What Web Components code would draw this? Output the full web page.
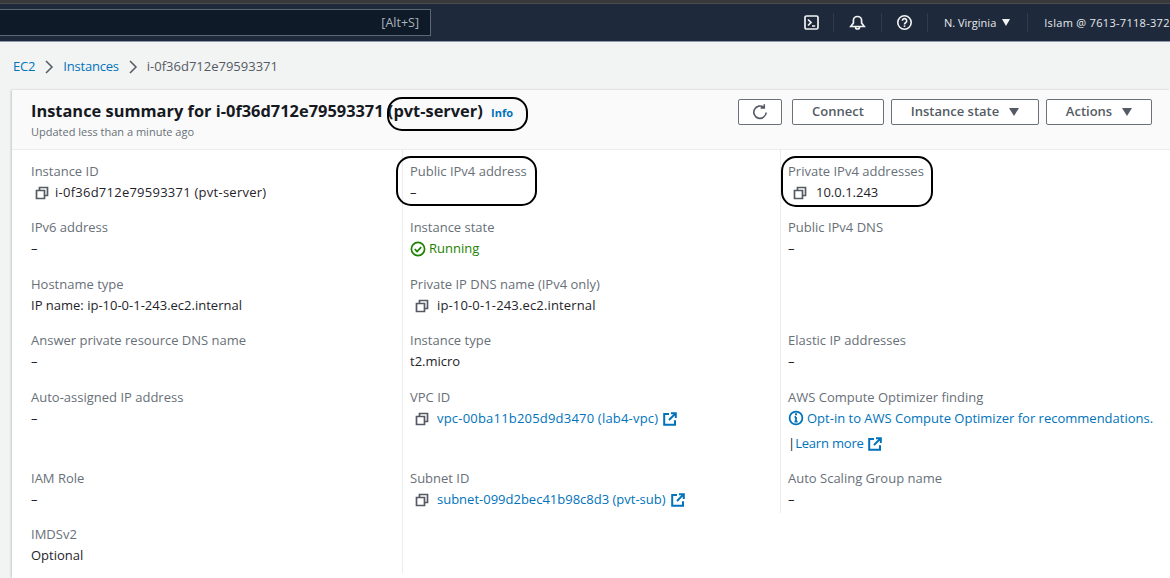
<!DOCTYPE html>
<html>
<head>
<meta charset="utf-8">
<title>Instance summary</title>
<style>
html,body {margin:0; height:578px; overflow:hidden; background:#f2f3f3;}
body {font:13px/19px "Open Sans","Noto Sans",sans-serif; color:#1f242b;}
</style>
</head>
<body>
<aws-topbar></aws-topbar>
<aws-crumbs></aws-crumbs>
<summary-card title-text="Instance summary for i-0f36d712e79593371 (pvt-server)" updated="Updated less than a minute ago">
  <aws-button slot="actions" wide="44" style="margin-right:3px"><svg width="18" height="18" viewBox="0 0 16 16" fill="none" stroke="#545b64" stroke-width="1.4"><path d="M13.5 8.5a5.5 5.5 0 1 1-2-4.6"/><path d="M11.8 1v3.3H8.6"/></svg></aws-button>
  <aws-button slot="actions" wide="92">Connect</aws-button>
  <aws-button slot="actions" wide="148" caret>Instance state</aws-button>
  <aws-button slot="actions" wide="106" caret>Actions</aws-button>

  <summary-field label="Instance ID"><copy-icon></copy-icon><span style="letter-spacing:.25px">i-0f36d712e79593371 (pvt-server)</span></summary-field>
  <summary-field label="Public IPv4 address">–</summary-field>
  <summary-field label="Private IPv4 addresses"><copy-icon style="margin:0 9px 0 5px"></copy-icon>10.0.1.243</summary-field>

  <summary-field label="IPv6 address">–</summary-field>
  <summary-field label="Instance state"><span style="color:#1d8102;display:inline-flex;align-items:center;gap:3px"><svg width="16" height="16" viewBox="0 0 16 16" fill="none" stroke="#1d8102" stroke-width="1.7"><circle cx="8" cy="8" r="6.6"/><path d="M4.8 8.2l2.3 2.3 4.1-4.4"/></svg>Running</span></summary-field>
  <summary-field label="Public IPv4 DNS">–</summary-field>

  <summary-field label="Hostname type">IP name: ip-10-0-1-243.ec2.internal</summary-field>
  <summary-field label="Private IP DNS name (IPv4 only)"><copy-icon style="margin:0 8px 0 5px"></copy-icon><span style="letter-spacing:.15px">ip-10-0-1-243.ec2.internal</span></summary-field>
  <summary-field></summary-field>

  <summary-field label="Answer private resource DNS name">–</summary-field>
  <summary-field label="Instance type">t2.micro</summary-field>
  <summary-field label="Elastic IP addresses">–</summary-field>

  <summary-field label="Auto-assigned IP address">–</summary-field>
  <summary-field label="VPC ID"><copy-icon style="margin:0 8px 0 5px"></copy-icon><span style="color:#0073bb;letter-spacing:.2px">vpc-00ba11b205d9d3470 (lab4-vpc)</span><ext-icon></ext-icon></summary-field>
  <summary-field label="AWS Compute Optimizer finding"><span style="color:#0073bb;display:inline-flex;align-items:center;gap:3px"><svg width="16" height="16" viewBox="0 0 16 16" fill="none" stroke="#0073bb" stroke-width="1.8"><circle cx="8" cy="8" r="6.4"/><path d="M8 7v4.6M6.4 11.6h3.2M6.6 7H8"/><path d="M7 4.2h2" stroke-width="2"/></svg>Opt-in to AWS Compute Optimizer for recommendations.</span><div style="margin-top:3px">|<span style="color:#0073bb;letter-spacing:-.2px">Learn more</span><ext-icon style="margin-left:4px"></ext-icon></div></summary-field>

  <summary-field label="IAM Role">–</summary-field>
  <summary-field label="Subnet ID"><copy-icon style="margin:0 8px 0 5px"></copy-icon><span style="color:#0073bb">subnet-099d2bec41b98c8d3 (pvt-sub)</span><ext-icon></ext-icon></summary-field>
  <summary-field label="Auto Scaling Group name">–</summary-field>

  <summary-field label="IMDSv2">Optional</summary-field>
  <summary-field></summary-field>
</summary-card>

<highlight-ring style="left:387px;top:97px;width:141px;height:34px"></highlight-ring>
<highlight-ring style="left:396px;top:156px;width:141px;height:50px"></highlight-ring>
<highlight-ring style="left:781px;top:156px;width:152px;height:51px"></highlight-ring>

<script>
customElements.define('aws-topbar', class extends HTMLElement {
    constructor() {
        super();
        this.attachShadow({ mode: 'open' }).innerHTML = `
        <style>
        :host {display:block; height:42px; background:#1e2a3b; border-top:3px solid #38393a; box-sizing:border-box; border-bottom:1px solid #8d99a8; box-shadow:inset 0 1px 0 #4a4c4e; color:#e6e9ec; font-size:11px; font-weight:500;}
        nav {display:flex; align-items:center; height:100%; white-space:nowrap; overflow:hidden;}
        .search {flex:none; width:431px; height:27px; box-sizing:border-box; margin-top:1px; background:#0f1a28; border:1px solid #5b6675; border-left:0; display:flex; align-items:center; justify-content:flex-end; padding-right:11px; color:#aab2bb; font-size:12.5px; font-weight:400;}
        .ico {flex:none; display:flex; justify-content:center; align-items:center; border-right:1px solid #2f3c4d; height:19px;}
        span {display:block;}
        </style>
        <nav>
            <div class="search">[Alt+S]</div>
            <div class="ico" style="margin-left:372px;width:30px;justify-content:flex-start"><svg width="17" height="17" viewBox="0 0 17 17" fill="none" stroke="#f2f3f3" stroke-width="1.7"><rect x="2" y="2" width="13" height="13" rx="1.5"/><path d="M5 5.5L8 8.5 5 11.5M9 12h3.2"/></svg></div>
            <div class="ico" style="width:47px"><svg width="17" height="17" viewBox="0 0 17 17" fill="none" stroke="#f2f3f3" stroke-width="1.7"><path d="M1.8 12.5h13.4L12.6 9V6.6a4.1 4.1 0 0 0-8.2 0V9z"/><path d="M6.5 13a2 2 0 0 0 4 0"/></svg></div>
            <div class="ico" style="width:45px"><svg width="17" height="17" viewBox="0 0 17 17" fill="none" stroke="#f2f3f3" stroke-width="1.6"><circle cx="8.5" cy="8.5" r="6.7"/><path d="M6.3 6.8a2.2 2.2 0 1 1 3.3 1.9c-.8.5-1.1.8-1.1 1.7"/><path d="M8.5 11.4v1.5"/></svg></div>
            <span style="margin-left:16px">N. Virginia</span>
            <svg style="margin-left:6px" width="8" height="7" viewBox="0 0 8 7" fill="#f2f3f3"><path d="M0 0h8L4 7z"/></svg>
            <div class="ico" style="margin-left:17px;width:0"></div>
            <span style="margin-left:16px;letter-spacing:.3px">Islam @ 7613-7118-372</span>
        </nav>`;
    }
});

customElements.define('aws-crumbs', class extends HTMLElement {
    constructor() {
        super();
        this.attachShadow({ mode: 'open' }).innerHTML = `
        <style>
        :host {display:flex; align-items:center; height:49px; margin-bottom:-1px; padding-left:13px; font-size:13px; font-weight:500; color:#545b64;}
        a {color:#0073bb; letter-spacing:-.2px;}
        svg {margin:0 9px;}
        </style>
        <a>EC2</a>
        <svg width="10" height="14" viewBox="0 0 10 14" fill="none" stroke="#545b64" stroke-width="1.5"><path d="M2 1l6 6-6 6"/></svg>
        <a>Instances</a>
        <svg width="10" height="14" viewBox="0 0 10 14" fill="none" stroke="#545b64" stroke-width="1.5"><path d="M2 1l6 6-6 6"/></svg>
        <span>i-0f36d712e79593371</span>`;
    }
});

customElements.define('summary-card', class extends HTMLElement {
    constructor() {
        super();
        this.attachShadow({ mode: 'open' }).innerHTML = `
        <style>
        :host {display:block; margin-left:12px; padding-bottom:5px; background:#fff; box-shadow:-1px 0 2px #00000030;}
        header {display:flex; justify-content:space-between; height:60px; box-sizing:border-box; padding:9px 18px 0 19px; background:#fafafa; border-bottom:1px solid #eaeded;}
        h1 {margin:0; font-size:16.4px; line-height:24px; font-weight:700; color:#16191f;}
        h1 small {font-size:11px; font-weight:700; color:#0073bb; margin-left:4px;}
        p {margin:0; font-size:11px; line-height:14px; color:#687078;}
        .acts {display:flex; gap:7px;}
        .grid {display:grid; grid-template-columns:390px 378px 1fr; grid-template-rows:repeat(4,56.4px) 81px 56px 60px;}
        </style>
        <header>
            <div><h1 id="t"></h1><p id="u"></p></div>
            <div class="acts"><slot name="actions"></slot></div>
        </header>
        <div class="grid"><slot></slot></div>`;
    }
    connectedCallback() {
        const s = this.shadowRoot;
        s.querySelector('#t').innerHTML = this.getAttribute('title-text') + ' <small>Info</small>';
        s.querySelector('#u').textContent = this.getAttribute('updated');
    }
});

customElements.define('summary-field', class extends HTMLElement {
    constructor() {
        super();
        this.attachShadow({ mode: 'open' }).innerHTML = `
        <style>
        :host {display:block; box-sizing:border-box; padding:12px 8px 0 19px; min-width:0; overflow:hidden;}
        .l {color:#687078; height:19px;}
        .v {margin-top:2px; white-space:nowrap;}
        </style>
        <div class="l" id="l"></div>
        <div class="v"><slot></slot></div>`;
    }
    connectedCallback() {
        this.shadowRoot.querySelector('#l').textContent = this.getAttribute('label') || '';
        // middle and right columns carry the thin divider
        const i = [...this.parentNode.querySelectorAll('summary-field')].indexOf(this);
        if (i % 3) {
            this.style.paddingLeft = '7px';
            this.style.borderLeft = '1px solid #eaeded';
        }
    }
});

customElements.define('aws-button', class extends HTMLElement {
    constructor() {
        super();
        this.attachShadow({ mode: 'open' }).innerHTML = `
        <style>
        :host {display:flex; justify-content:center; align-items:center; gap:10px; box-sizing:border-box; height:26px; border:1px solid #6b7178; border-radius:2px; background:#fff; color:#545b64; font-weight:600; font-size:13px; line-height:17px; padding-bottom:1px;}
        svg {display:none;}
        :host([caret]) svg {display:block;}
        </style>
        <slot></slot>
        <svg width="10" height="8" viewBox="0 0 10 8" fill="#545b64"><path d="M0 0h10L5 8z"/></svg>`;
    }
    connectedCallback() {
        this.style.width = this.getAttribute('wide') + 'px';
    }
});

customElements.define('copy-icon', class extends HTMLElement {
    constructor() {
        super();
        this.attachShadow({ mode: 'open' }).innerHTML = `
        <style>:host {display:inline-block; margin:0 6px 0 4px; vertical-align:-3px; height:14px;}</style>
        <svg width="14" height="14" viewBox="0 0 14 14" fill="none" stroke="#545b64" stroke-width="1.7"><path d="M1.5 4.5h8v8h-8z"/><path d="M4.5 4.5V1.5h8v8h-3"/></svg>`;
    }
});

customElements.define('ext-icon', class extends HTMLElement {
    constructor() {
        super();
        this.attachShadow({ mode: 'open' }).innerHTML = `
        <style>:host {display:inline-block; margin-left:5px; vertical-align:-3px; height:14px;}</style>
        <svg width="14" height="14" viewBox="0 0 14 14" fill="none" stroke="#0073bb" stroke-width="2"><path d="M6 2H1.2v10.8H12V8.2"/><path d="M8 1.2h4.8V6M12.6 1.4L6 8"/></svg>`;
    }
});

// the black hand-drawn marks lying over the screenshot
customElements.define('highlight-ring', class extends HTMLElement {
    constructor() {
        super();
        this.attachShadow({ mode: 'open' }).innerHTML = `
        <style>:host {position:absolute; box-sizing:border-box; border:2.5px solid #000; border-radius:15px; pointer-events:none;}</style>`;
    }
});
</script>
</body>
</html>
